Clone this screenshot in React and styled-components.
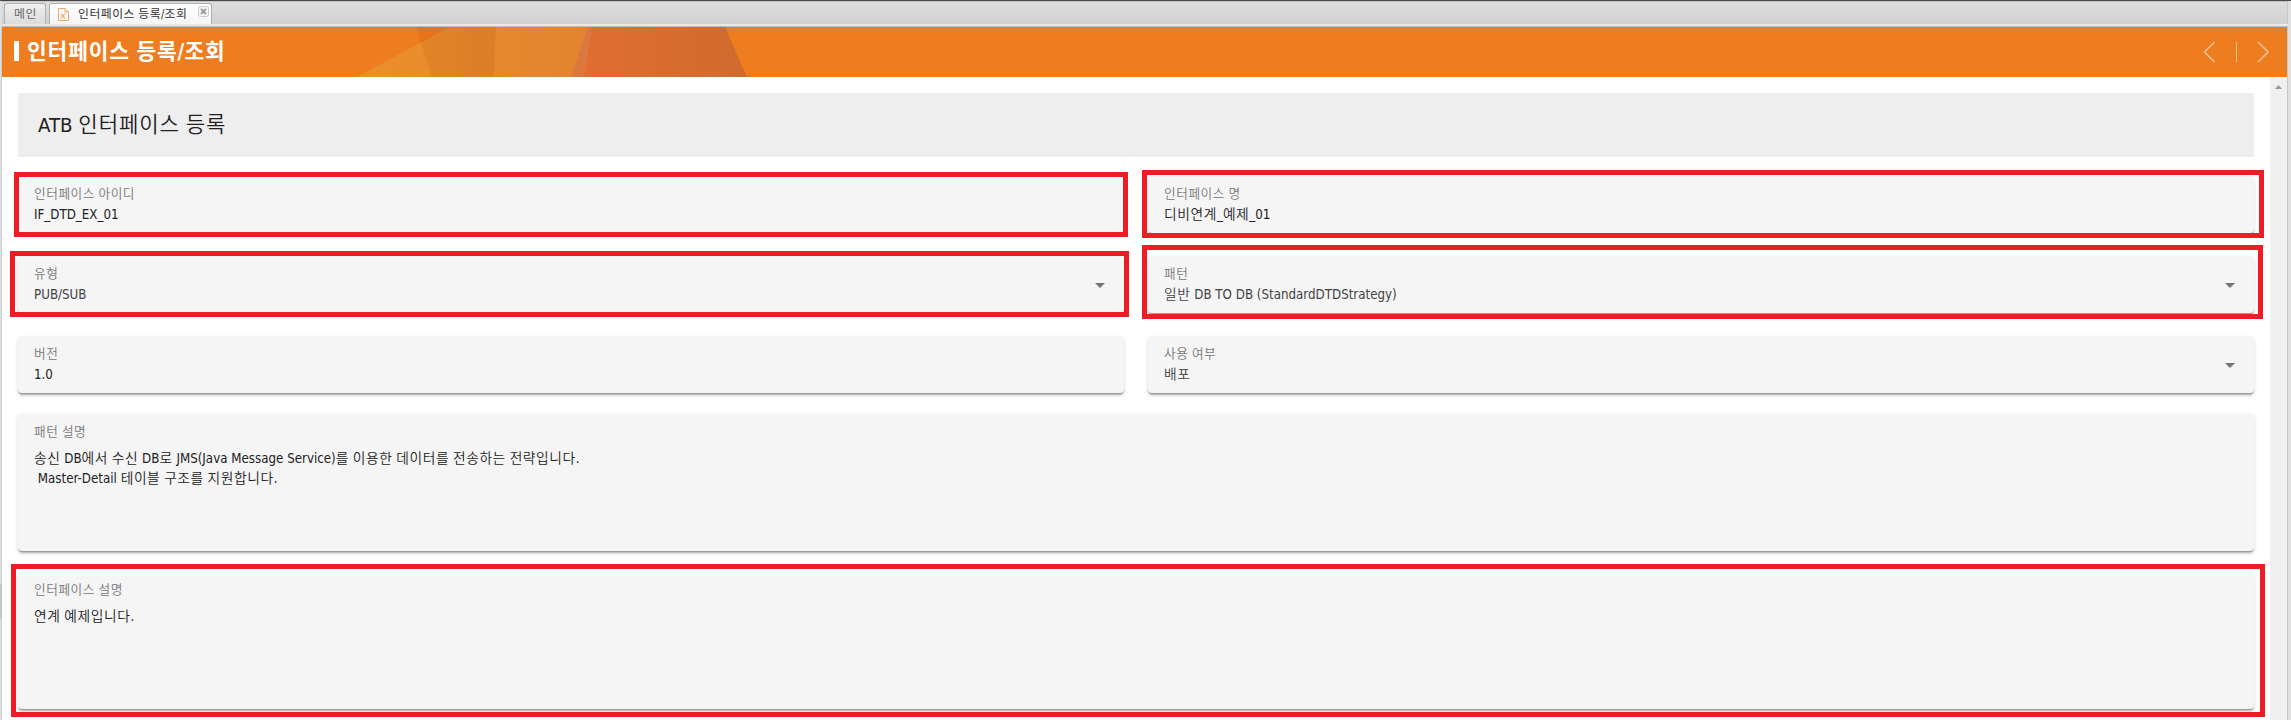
import React from "react";
import styled, { createGlobalStyle } from "styled-components";

const GlobalStyle = createGlobalStyle`
  *, *::before, *::after { box-sizing: border-box; }
  html, body { margin: 0; background: #fff; }
  body {
    font-family: "DejaVu Sans Condensed", "Noto Sans CJK KR", sans-serif;
    color: #212121;
    overflow: hidden;
  }
`;

const Frame = styled.div`
  position: relative;
  display: flex;
  flex-direction: column;
  height: 720px;
  border-top: 1px solid #4a4749;
  background: #e0e0e0;
`;

const SplitHandle = styled.span`
  position: absolute;
  left: 0;
  top: 583px;
  width: 2px;
  height: 35px;
  background: #c6c6c6;
`;

const TabBar = styled.nav`
  display: flex;
  align-items: flex-end;
  gap: 3px;
  height: 23px;
  flex: none;
  padding: 0 4px 0 2px;
  margin: 0 3px 0 2px;
  border-top: 1px solid #c4c4c4;
  border-right: 1px solid #c8c8c8;
  background: linear-gradient(#dedede, #d1d1d1);
`;

const Tab = styled.div`
  display: flex;
  height: 21px;
  width: ${(p) => p.$width}px;
  padding: 0 2px 0 9px;
  border: 1px solid #b0b0b0;
  border-bottom: 0;
  border-radius: 3px 3px 0 0;
  background: ${(p) => (p.$active ? "linear-gradient(#fff, #f5f5f5)" : "linear-gradient(#f0f0f0, #dcdcdc)")};
  color: ${(p) => (p.$active ? "#333" : "#666")};
  font-size: 11.4px;
  line-height: 21px;
  white-space: nowrap;
`;

const TabIcon = styled.svg`
  width: 11px;
  height: 13px;
  margin: 4px 9px 0 -1px;
  flex: none;
`;

const CloseIcon = styled.svg`
  width: 11px;
  height: 11px;
  margin: 2px 0 0 auto;
  flex: none;
`;

const TabBase = styled.div`
  height: 3px;
  flex: none;
  margin: 0 3px 0 2px;
  background: #e9e9e9;
  border-bottom: 1px solid #bbb;
`;

const Body = styled.div`
  flex: 1;
  min-height: 0;
  display: flex;
  flex-direction: column;
  border-right: 1px solid #c8c8c8;
  border-left: 1px solid #ccc;
  margin: 0 3px 0 1px;
  background: #fff;
`;

const Header = styled.header`
  position: relative;
  display: flex;
  align-items: center;
  height: 50px;
  flex: none;
  padding: 0 18px 0 12px;
  background: #ee7d20;
`;

const HeaderArt = styled.svg`
  position: absolute;
  left: 350px;
  top: 0;
  width: 400px;
  height: 50px;
`;

const HeaderMark = styled.span`
  flex: none;
  width: 5px;
  height: 20px;
  margin: -2px 8px 0 0;
  background: #fff;
`;

const HeaderTitle = styled.h1`
  position: relative;
  margin: 0 auto 0 0;
  color: #fff;
  font-size: 20.6px;
  line-height: 30px;
  font-weight: 700;
  white-space: nowrap;
`;

const HeaderNav = styled.svg`
  width: 66px;
  height: 22px;
`;

const Scroller = styled.div`
  flex: 1;
  min-height: 0;
  display: flex;
`;

const Content = styled.main`
  flex: 1;
  display: flex;
  flex-direction: column;
  padding: 16px 16px 0;
`;

const ScrollTrack = styled.div`
  width: 17px;
  padding: 7px 5px;
  background: #f0f0f0;
  line-height: 0;
`;

const SectionTitle = styled.h2`
  margin: 0 0 20px;
  height: 64px;
  flex: none;
  padding-left: 20px;
  background: #eee;
  font-size: 20.3px;
  font-weight: 400;
  line-height: 65px;
`;

const Grid = styled.div`
  display: grid;
  grid-template-columns: 1fr 1fr;
  gap: 23px 24px;
  flex: none;
  margin-bottom: 20px;
`;

const Card = styled.section`
  position: relative;
  flex: none;
  height: ${(p) => (p.$tall ? 138 : 57)}px;
  margin-bottom: ${(p) => (p.$tall ? 20 : 0)}px;
  padding: ${(p) => (p.$tall ? 8 : 7)}px 16px 0;
  border-bottom: 1px solid #9c9c9c;
  border-radius: 4px;
  background: #f5f5f5;
  box-shadow: 0 3px 1px -2px rgba(0, 0, 0, 0.14), 0 2px 2px rgba(0, 0, 0, 0.08),
    0 1px 4px rgba(0, 0, 0, 0.12);
`;

const Label = styled.div`
  height: 20px;
  color: #777;
  font-size: 12.2px;
  line-height: 20px;
`;

const Value = styled.div`
  margin-top: ${(p) => (p.$tall ? 7 : 1)}px;
  color: ${(p) => (p.$muted ? "#424242" : "#212121")};
  font-size: 13.23px;
  line-height: 20px;
  white-space: pre;
`;

const Line = styled.div`
  height: 20px;
`;

const Hangul = styled.span`
  font-family: "Noto Sans CJK KR", sans-serif;
  font-size: 1.04em;
  line-height: 1;
  letter-spacing: 0.042em;
  font-weight: ${(p) => p.$weight || "inherit"};
`;

const Caret = styled.svg`
  position: absolute;
  right: 19px;
  top: 26px;
  width: 10px;
  height: 5px;
`;

const Highlight = styled.span`
  position: absolute;
  z-index: 1;
  top: ${(p) => p.$edges[0]}px;
  right: ${(p) => p.$edges[1]}px;
  bottom: ${(p) => p.$edges[2]}px;
  left: ${(p) => p.$edges[3]}px;
  border: 5px solid #ee1c24;
  pointer-events: none;
`;

/* Sets Hangul runs on a full-em advance beside the narrower Latin face. */
function Mixed({ children, weight }) {
  return children
    .split(/([가-힣]+)/)
    .filter(Boolean)
    .map((run, i) => (/[가-힣]/.test(run) ? <Hangul key={i} $weight={weight}>{run}</Hangul> : run));
}

function Field({ label, value, select, tall, highlight }) {
  return (
    <Card $tall={tall}>
      <Label><Mixed weight={350}>{label}</Mixed></Label>
      <Value $tall={tall} $muted={select}>
        {value.split("\n").map((line) => (
          <Line key={line}><Mixed weight={350}>{line}</Mixed></Line>
        ))}
      </Value>
      {select && (
        <Caret viewBox="0 0 10 5">
          <path d="M0 0h10L5 5z" fill="#757575" />
        </Caret>
      )}
      {highlight && <Highlight $edges={highlight} />}
    </Card>
  );
}

/* highlight: top, right, bottom, left offsets of the marker frame */
const FIELDS = [
  { label: "인터페이스 아이디", value: "IF_DTD_EX_01", highlight: [-5, -4, -4, -4] },
  { label: "인터페이스 명", value: "디비연계_예제_01", highlight: [-7, -10, -5, -6] },
  { label: "유형", value: "PUB/SUB", select: true, highlight: [-6, -5, -4, -8] },
  { label: "패턴", value: "일반 DB TO DB (StandardDTDStrategy)", select: true, highlight: [-12, -9, -6, -6] },
  { label: "버전", value: "1.0" },
  { label: "사용 여부", value: "배포", select: true },
];

export default function App() {
  return (
    <>
      <GlobalStyle />
      <Frame>
        <TabBar>
          <Tab $width={42}><span><Mixed>메인</Mixed></span></Tab>
          <Tab $width={163} $active>
            <TabIcon viewBox="0 0 11 13" fill="none" stroke="#f0a468">
              <path d="M.5 .5h6.5l3.5 3.5v8.500h-10zM7 .5v3.500h3.500" />
              <path d="M3 5.500l4 5M7 5.500l-4 5" strokeWidth="1.2" />
            </TabIcon>
            <span><Mixed>인터페이스 등록/조회</Mixed></span>
            <CloseIcon viewBox="0 0 11 11" fill="none">
              <rect x=".5" y=".5" width="10" height="10" rx="2" stroke="#ccc" fill="#f7f7f7" />
              <path d="M3 3l5 5M8 3l-5 5" stroke="#999" strokeWidth="1.800" />
            </CloseIcon>
          </Tab>
        </TabBar>
        <TabBase />
        <Body>
          <Header>
            <HeaderArt viewBox="352 0 400 50" preserveAspectRatio="none">
              <defs>
                <linearGradient id="amber"><stop stopColor="#eb902c" /><stop offset="1" stopColor="#e4832f" /></linearGradient>
                <linearGradient id="ochre"><stop stopColor="#e18426" /><stop offset="1" stopColor="#dd7d28" /></linearGradient>
                <linearGradient id="rust"><stop stopColor="#e06d31" /><stop offset="1" stopColor="#d06b2d" /></linearGradient>
              </defs>
              <path d="M357 50L450 0H588L571 50z" fill="url(#amber)" />
              <path d="M416 0H450L421 16z" fill="#e6731a" />
              <path d="M450 0H496L494 50H432L421 16z" fill="url(#ochre)" />
              <path d="M588 0H592L584 50H571z" fill="#da7840" />
              <path d="M592 0H725L747 50H584z" fill="url(#rust)" />
            </HeaderArt>
            <HeaderMark />
            <HeaderTitle><Mixed>인터페이스 등록/조회</Mixed></HeaderTitle>
            <HeaderNav viewBox="0 0 66 22" fill="none" stroke="#f8bf92" strokeWidth="1.600">
              <path d="M11.500 1L1.500 11l10 10M55 1l10 10-10 10" />
              <path d="M33.500 1v20" strokeWidth="1" />
            </HeaderNav>
          </Header>
          <Scroller>
            <Content>
              <SectionTitle><Mixed weight={350}>ATB 인터페이스 등록</Mixed></SectionTitle>
              <Grid>
                {FIELDS.map((f) => <Field key={f.label} {...f} />)}
              </Grid>
              <Field
                tall
                label="패턴 설명"
                value={"송신 DB에서 수신 DB로 JMS(Java Message Service)를 이용한 데이터를 전송하는 전략입니다.\n Master-Detail 테이블 구조를 지원합니다."}
              />
              <Field tall label="인터페이스 설명" value="연계 예제입니다." highlight={[-8, -11, -8, -7]} />
            </Content>
            <ScrollTrack>
              <svg width="7" height="4"><path d="M0 4L3.500 0 7 4z" fill="#999" /></svg>
            </ScrollTrack>
          </Scroller>
        </Body>
        <SplitHandle />
      </Frame>
    </>
  );
}
